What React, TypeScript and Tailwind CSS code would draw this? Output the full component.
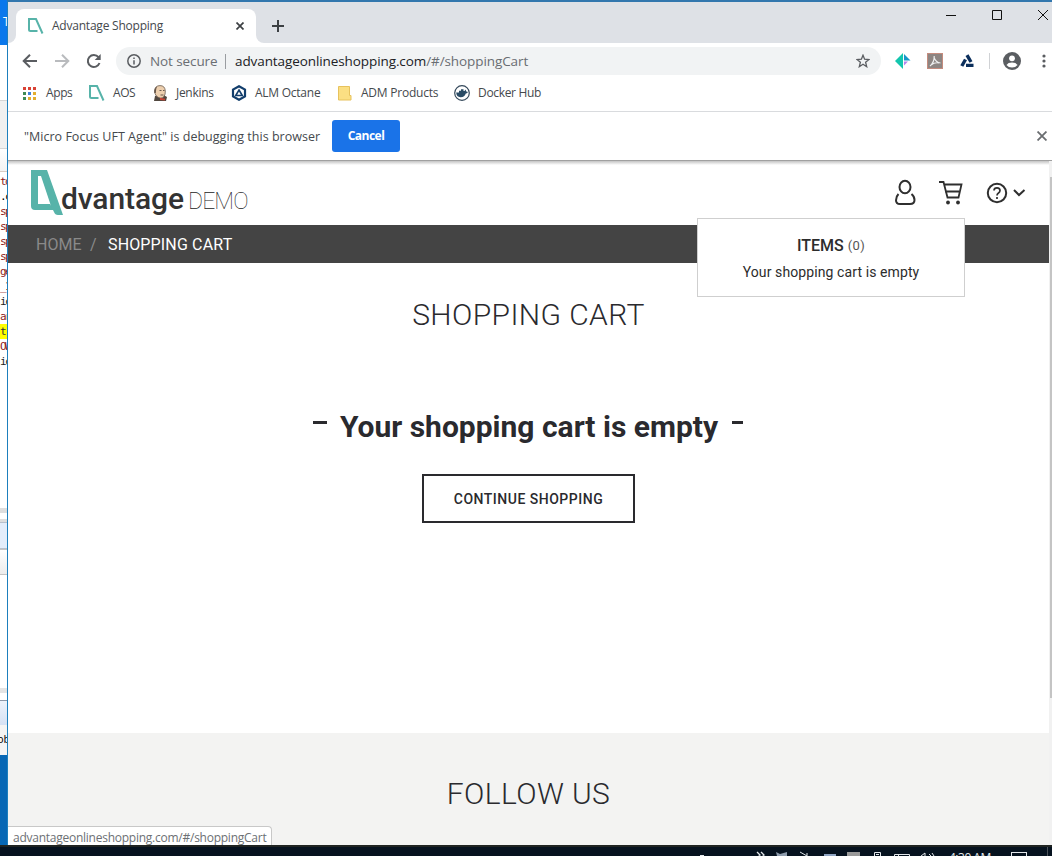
import React from "react";

const ui = "font-['Open_Sans','Noto_Sans',sans-serif]";
const roboto = "font-[Roboto,sans-serif]";

function AosMark({ className }: { className: string }) {
  return (
    <svg className={className} viewBox="0 0 32 45" fill="#57b3a9">
      <path
        fillRule="evenodd"
        d="M0 0H16L32 45H27Q24 45 23 42L22 40H4Q0 40 0 36ZM7 6V34H19L20 36L10 6Z"
      />
    </svg>
  );
}

function SmallMark({ className }: { className: string }) {
  return (
    <svg className={className} viewBox="0 0 16 16" fill="none" stroke="#57b3a9" strokeWidth="2">
      <path d="M9.500 13H2.500Q1 13 1 11.500V1H8L14.500 15.500" />
    </svg>
  );
}

const codeLines = [
  { text: "to", cls: "text-[#8b1a1a]" },
  { text: ".c", cls: "text-[#000]" },
  { text: "sp", cls: "text-[#8b1a1a]" },
  { text: "sp", cls: "text-[#8b1a1a]" },
  { text: "sp", cls: "text-[#8b1a1a]" },
  { text: "sp", cls: "text-[#8b1a1a]" },
  { text: "ge", cls: "text-[#8b1a1a]" },
  { text: "_1", cls: "text-[#8b1a1a]" },
  { text: "ic", cls: "text-[#222]" },
  { text: "ar", cls: "text-[#8b1a1a]" },
  { text: "t", cls: "bg-[#ffff00] text-[#333]" },
  { text: "OW", cls: "text-[#8b1a1a]" },
  { text: "ic", cls: "text-[#222]" },
];

function BackgroundWindow() {
  return (
    <div className="flex h-[845px] w-[7px] shrink-0 flex-col overflow-hidden bg-white">
      <div className={`h-[45px] shrink-0 bg-[#0a78ec] pt-[14px] pl-[3px] text-[12px] leading-[16px] text-white ${ui}`}>T</div>
      <div className="h-[55px] shrink-0 bg-white" />
      <div className="h-[49px] shrink-0 border-y border-[#d5d5d5] bg-[#f0f0f0]" />
      <div className="h-[22px] shrink-0 bg-gradient-to-b from-white to-[#f3f3f3]" />
      <div className="h-[3px] shrink-0 border-t border-[#d9cdc4]" />
      <div className="h-[334px] shrink-0">
        {codeLines.map((l, i) => (
          <div
            key={i}
            className={`h-[15px] overflow-hidden font-['DejaVu_Sans_Mono','Liberation_Mono',monospace] text-[11px] leading-[15px] tracking-[-1.5px] whitespace-nowrap ${l.cls}`}
          >
            {l.text}
          </div>
        ))}
      </div>
      <div className="h-[5px] shrink-0 bg-[#dedede]" />
      <div className="h-[6px] shrink-0 bg-white" />
      <div className="h-[3px] shrink-0 bg-[#dedede]" />
      <div className="h-[27px] shrink-0 border-y border-[#b8c0cc] bg-[#e3edfb]" />
      <div className="h-[26px] shrink-0 border-y border-[#c4c4c4] bg-gradient-to-b from-white to-[#ececec]" />
      <div className="h-[113px] shrink-0 bg-white" />
      <div className="h-[5px] shrink-0 bg-[#e4e4e4]" />
      <div className="h-[7px] shrink-0 bg-white" />
      <div className="h-[25px] shrink-0 border-t border-[#8e98a8] bg-gradient-to-b from-[#eef3fb] to-[#d5e1f4]" />
      <div className={`h-[30px] shrink-0 bg-[#f4f4f4] pt-[6px] text-[11px] leading-[16px] whitespace-nowrap text-black ${ui}`}>
        <span className="-ml-[3px]">ob</span>
      </div>
      <div className="flex-1 bg-[#0767b5]" />
    </div>
  );
}

function TabStrip() {
  return (
    <div className="flex h-[41px] shrink-0 bg-[#dee1e6]">
      <div className="flex w-[8px] shrink-0 bg-white">
        <div className="w-[8px] rounded-br-[8px] bg-[#dee1e6]" />
      </div>
      <div className="mt-[7px] flex h-[34px] w-[240px] shrink-0 items-center rounded-t-[8px] bg-white pl-[12px]">
        <SmallMark className="h-[16px] w-[16px] shrink-0" />
        <span className={`ml-[8px] w-[184px] text-[12px] tracking-[-0.22px] whitespace-nowrap text-[#45494d] ${ui}`}>Advantage Shopping</span>
        <svg className="h-[8px] w-[8px]" viewBox="0 0 8 8" stroke="#3c4043" strokeWidth="1.7">
          <path d="M.5 .5 7.5 7.5M7.5 .5.5 7.5" />
        </svg>
      </div>
      <div className="flex w-[8px] shrink-0 bg-white">
        <div className="w-[8px] rounded-bl-[8px] bg-[#dee1e6]" />
      </div>
      <svg className="mt-[18px] ml-[8px] h-[12px] w-[12px]" viewBox="0 0 12 12" stroke="#3c4043" strokeWidth="2">
        <path d="M6 0V12M0 6H12" />
      </svg>
      <div className="flex-1" />
      <svg className="mt-[7px] mr-[4px] h-[12px] w-[102px]" viewBox="0 0 102 12" fill="none" stroke="#111" strokeWidth="1">
        <path d="M0 6.5H10M46.5 1.5H55.5V10.5H46.5Z M92 1 102 11M102 1 92 11" />
      </svg>
    </div>
  );
}

function Toolbar() {
  return (
    <div className={`flex h-[36px] shrink-0 items-center pl-[14px] ${ui}`}>
      <svg className="h-[16px] w-[82px] shrink-0" viewBox="0 0 82 16" fill="none" strokeWidth="2">
        <path d="M15 8H2M8 1.7 1.7 8 8 14.3" stroke="#5a5d61" />
        <path d="M33 8H46M40 1.7 46.3 8 40 14.3" stroke="#b9bbbe" />
        <path d="M76.5 4.2A6 6 0 1 0 77.500 10" stroke="#5a5d61" />
        <path d="M78.700 1V7H72.700Z" fill="#5a5d61" stroke="none" />
      </svg>
      <div className="ml-[12px] flex h-[28px] w-[765px] shrink-0 items-center rounded-full bg-[#f1f3f4] pl-[11px] text-[13.5px] whitespace-nowrap">
        <svg className="h-[14px] w-[14px] shrink-0" viewBox="0 0 14 14" fill="none" stroke="#5a5d61" strokeWidth="1.5">
          <circle cx="7" cy="7" r="6.2" />
          <path d="M7 6.2V10.5M7 3.5V5" />
        </svg>
        <span className="ml-[9px] w-[75px] tracking-[-0.1px] text-[#6a6e73]">Not secure</span>
        <span className="h-[15px] w-px bg-[#9a9da1]" />
        <span className="ml-[9px] w-[621px] tracking-[-0.09px] text-[#696d72]">
          <span className="text-[#202124]">advantageonlineshopping.com</span>/#/shoppingCart
        </span>
        <svg className="h-[14px] w-[14px] shrink-0" viewBox="0 0 14 14" fill="none" stroke="#5a5d61" strokeWidth="1.3">
          <path d="M7 1.2 8.6 5.2 13 5.5 9.6 8.2 10.7 12.7 7 10.3 3.3 12.7 4.4 8.2 1 5.5 5.4 5.2Z" />
        </svg>
      </div>
      <svg className="ml-[14px] h-[16px] w-[16px] shrink-0" viewBox="0 0 16 16">
        <path d="M0 8 8 0V16Z" fill="#13c6ae" />
        <path d="M9 1 15.5 7.5H9Z" fill="#1597c9" />
        <path d="M9 8.5H13L9 12.5Z" fill="#b383ee" />
      </svg>
      <svg className="ml-[16px] h-[16px] w-[16px] shrink-0" viewBox="0 0 16 16">
        <rect x=".5" y=".5" width="15" height="15" fill="#8d8582" stroke="#c48b7d" />
        <path d="M3 13Q7.500 9 7.200 3M7.200 5Q9 9.500 13.500 10M4 12Q8 9 12 10" fill="none" stroke="#eee" strokeWidth="1.2" />
      </svg>
      <svg className="ml-[17px] h-[14px] w-[15px] shrink-0" viewBox="0 0 15 14" stroke="#0c2f5c" strokeWidth="3.4" fill="none">
        <path d="M7 1.2 11 8M5.500 5.500 1.800 12M6 11.400H13.500" />
      </svg>
      <span className="ml-[14px] h-[16px] w-px bg-[#d0d2d5]" />
      <svg className="ml-[13px] h-[18px] w-[18px] shrink-0" viewBox="0 0 18 18">
        <circle cx="9" cy="9" r="9" fill="#5a5d61" />
        <circle cx="9" cy="6.3" r="2.9" fill="#fff" />
        <path d="M3.5 13Q5 10.6 9 10.6T14.5 13Q12.5 15.6 9 15.6T3.5 13" fill="#fff" />
      </svg>
      <svg className="ml-[21px] h-[14px] w-[4px] shrink-0" viewBox="0 0 4 14" fill="#5a5d61">
        <circle cx="2" cy="2" r="1.6" />
        <circle cx="2" cy="7" r="1.6" />
        <circle cx="2" cy="12" r="1.6" />
      </svg>
    </div>
  );
}

const dots = ["#d94235", "#d94235", "#d94235", "#3f8a55", "#3f80d8", "#e3ae2f", "#3f8a55", "#e3ae2f", "#e3ae2f"];

function Bookmarks() {
  return (
    <div className={`flex h-[33px] shrink-0 items-center border-b border-[#d9dbde] pb-[4px] pl-[15px] text-[12px] whitespace-nowrap text-[#45494d] ${ui}`}>
      <svg className="h-[13px] w-[13px] shrink-0" viewBox="0 0 13 13">
        {dots.map((c, i) => (
          <rect key={i} x={(i % 3) * 5} y={Math.floor(i / 3) * 5} width="3" height="3" fill={c} />
        ))}
      </svg>
      <span className="ml-[10px] w-[43px] tracking-[-0.4px]">Apps</span>
      <SmallMark className="h-[16px] w-[16px] shrink-0" />
      <span className="ml-[8px] w-[39px] tracking-[-0.4px]">AOS</span>
      <svg className="h-[16px] w-[16px] shrink-0" viewBox="0 0 16 16">
        <path d="M2 16 3 11 10 9 15 12 14 16Z" fill="#51473f" />
        <path d="M2.500 6Q3 .6 8 .6T13.300 6Q13.500 13 8.500 13.200Q3 12 2.500 6" fill="#edcfae" stroke="#6b5d52" strokeWidth=".8" />
        <path d="M2.300 8Q2 3 5 1.500Q3.800 4 3.800 8Z" fill="#65564a" />
        <path d="M7.500 5.500H9.500M11 5.500H12.500M8.500 10H11.500" fill="none" stroke="#463a33" strokeWidth=".8" />
        <path d="M8 12.7 13 13.8 13 15.5 8 15Z" fill="#c44334" />
      </svg>
      <span className="ml-[8px] w-[55px] tracking-[-0.3px]">Jenkins</span>
      <svg className="h-[16px] w-[16px] shrink-0" viewBox="0 0 16 16" fill="none" stroke="#123e6c">
        <path d="M8 1.2 14 4.6V11.4L8 14.8 2 11.4V4.6Z" strokeWidth="2.2" />
        <path d="M8 5 11.3 10.5H4.7Z" strokeWidth="1.6" />
      </svg>
      <span className="ml-[8px] w-[83px] tracking-[-0.25px]">ALM Octane</span>
      <svg className="h-[15px] w-[14px] shrink-0" viewBox="0 0 14 15">
        <path d="M.5 .5H11.5V9.5H13V14H.5Z" fill="#fbdf83" stroke="#e7c25d" />
      </svg>
      <span className="ml-[9px] w-[93px] tracking-[-0.23px]">ADM Products</span>
      <svg className="h-[16px] w-[16px] shrink-0" viewBox="0 0 16 16">
        <circle cx="8" cy="8" r="7.3" fill="#fff" stroke="#35495b" strokeWidth="1.2" />
        <path d="M2.2 7.4H5V5.7H7V4.2H9.5V6H10.5L11.5 4.6L12.3 6.6L14 7Q13 8.5 11.8 8.5Q10.7 12.3 6.5 12.2Q2.4 11.8 2.2 7.4" fill="#294b65" />
      </svg>
      <span className="ml-[8px] tracking-[-0.32px]">Docker Hub</span>
    </div>
  );
}

function InfoBar() {
  return (
    <div className={`flex h-[49px] shrink-0 items-center border-b border-[#a0a0a0] pl-[16px] ${ui}`}>
      <span className="w-[308px] pt-[2px] text-[12.5px] tracking-[0.02px] whitespace-nowrap text-[#45494d]">"Micro Focus UFT Agent" is debugging this browser</span>
      <button className="h-[32px] w-[68px] rounded-[3px] bg-[#1a73e8] text-[12px] font-bold tracking-[-0.5px] text-white">Cancel</button>
      <div className="flex-1" />
      <svg className="mr-[5px] h-[10px] w-[10px]" viewBox="0 0 9 9" stroke="#6a6d70" strokeWidth="1.6">
        <path d="M.5 .5 8.5 8.5M8.5 .5.5 8.5" />
      </svg>
    </div>
  );
}

function CartPopup() {
  return (
    <div className="absolute top-[57px] left-[689px] h-[79px] w-[268px] border border-[#cfcfcf] bg-white text-center text-[#2c2c2c]">
      <div className="mt-[17px] h-[20px] text-[16px] leading-[20px] font-medium">
        ITEMS <span className="relative -top-px text-[13px] font-normal tracking-[0.4px] text-[#555]">(0)</span>
      </div>
      <div className="mt-[7px] text-[14px] leading-[18px] tracking-[0.1px]">Your shopping cart is empty</div>
    </div>
  );
}

function ShopPage() {
  return (
    <div className={`relative flex flex-1 overflow-hidden bg-white ${roboto}`}>
      <div className="flex w-[1041px] shrink-0 flex-col">
        <div className="h-[4px] shrink-0 bg-gradient-to-b from-[#c4c4c4] to-white" />
        <header className="flex h-[60px] shrink-0 items-start pl-[23px]">
          <AosMark className="mt-[5px] h-[45px] w-[32px] shrink-0" />
          <span className="-ml-[2px] w-[127px] pt-[16px] text-[30px] leading-[36px] font-medium tracking-[-0.1px] text-[#333]">dvantage</span>
          <span className="pt-[20px] text-[23px] leading-[34px] font-thin tracking-[-0.9px] text-[#222]">DEMO</span>
          <div className="flex-1" />
          <svg className="mt-[14px] mr-[23px] h-[28px] w-[134px]" viewBox="0 0 134 28" fill="none" stroke="#2f2f2f" strokeWidth="2">
            <ellipse cx="13" cy="8" rx="5.5" ry="6.3" />
            <path d="M6.5 15Q4 17.5 4 21.2Q4 25 8 25H18Q22.500 25 22.500 21Q22.500 17.500 19.500 15" />
            <path d="M47 3H51.500L55.500 18.500H66.500L69.500 5.500H52M53 12.500H67" strokeWidth="1.800" />
            <circle cx="56" cy="23.500" r="1.900" fill="#2f2f2f" stroke="none" />
            <circle cx="66" cy="23.500" r="1.900" fill="#2f2f2f" stroke="none" />
            <circle cx="105" cy="14" r="9.200" />
            <path d="M102 11.500Q102 8.800 105 8.800T108 11.500Q108 13 106.500 14Q105 15 105 16.500M105 18V20" strokeWidth="1.700" />
            <path d="M122 11 127 16 132.500 11" />
          </svg>
        </header>
        <nav className="flex h-[38px] shrink-0 items-center bg-[#444] pt-[2px] pl-[28px] text-[16px] whitespace-nowrap">
          <span className="w-[54px] text-[#8a8a8a]">HOME</span>
          <span className="w-[18px] text-[#8a8a8a]">/</span>
          <span className="tracking-[0.15px] text-white">SHOPPING CART</span>
        </nav>
        <main className="flex h-[470px] shrink-0 flex-col items-center text-[#2a2a2e]">
          <h1 className="mt-[34px] h-[36px] text-[30px] leading-[36px] font-light tracking-[0.4px]">SHOPPING CART</h1>
          <div className="mt-[76px] mr-[2px] flex h-[36px] w-[430px] items-start justify-between">
            <span className="mt-[12px] h-[3px] w-[14px] bg-[#2a2a2e]" />
            <span className="text-[30px] leading-[36px] font-bold">Your shopping cart is empty</span>
            <span className="mt-[12px] h-[3px] w-[11px] bg-[#2a2a2e]" />
          </div>
          <button className="mt-[29px] h-[49px] w-[213px] border-2 border-[#2a2a2e] pt-[2px] text-[14px] font-medium tracking-[0.5px]">CONTINUE SHOPPING</button>
        </main>
        <footer className="flex flex-1 justify-center bg-[#f3f3f2] text-[#2a2a2e]">
          <h2 className="pt-[43px] text-[30px] leading-[36px] font-light tracking-[0.4px]">FOLLOW US</h2>
        </footer>
      </div>
      <div className="flex w-[3px] flex-col bg-[#f1f1f1] pl-[1px]">
        <div className="mt-[16px] h-[521px] bg-[#c4c4c4]" />
      </div>
      <CartPopup />
      <div className={`absolute bottom-0 left-0 h-[19px] w-[264px] overflow-hidden rounded-tr-[4px] border-t border-r border-[#c8c8c8] bg-white pl-[5px] text-[12px] leading-[21px] tracking-[-0.25px] whitespace-nowrap text-[#6c7074] ${ui}`}>
        advantageonlineshopping.com/#/shoppingCart
      </div>
    </div>
  );
}

function Taskbar() {
  return (
    <div className="flex h-[11px] shrink-0 justify-end overflow-hidden border-t-2 border-[#202422] bg-[#06121f]">
      <svg className="h-[9px] w-[249px] shrink-0" viewBox="0 0 249 9" fill="none" stroke="#e4e8ec" strokeWidth="1">
        <path d="M0 8.500H4" />
        <path d="M57 5 60 8 58 10M61 5 64 8 62 10" strokeWidth="1.300" />
        <path d="M76 5 80 7 87 5V9H77Z" fill="#8d9bac" stroke="none" />
        <path d="M100 5 107 9M107 6V9" />
        <path d="M124 7H136V9H124Z" fill="#8fa4c3" stroke="none" />
        <path d="M147 5H160V9H147Z" fill="#999" stroke="none" />
        <path d="M174.500 9V5.500H180.500V9M176 7.500H179M194.500 9V7.500H209.500V9M198.500 7V9M221 9 225 6V9M229 7 231 9M232 6 234 9" />
      </svg>
      <div className={`h-[9px] w-[62px] shrink-0 overflow-hidden text-[12px] leading-[22px] tracking-[-0.5px] whitespace-nowrap text-[#e4e8ec] ${ui}`}>4:30 AM</div>
      <div className="mt-[5px] h-[9px] w-[16px] shrink-0 border border-[#e4e8ec]" />
      <div className="ml-[20px] w-px shrink-0 bg-[#4a5058]" />
      <div className="w-[4px] shrink-0" />
    </div>
  );
}

export default function App() {
  return (
    <div className="flex h-[856px] w-[1052px] flex-col overflow-hidden bg-white">
      <div className="flex h-[845px] shrink-0">
        <BackgroundWindow />
        <div className="flex h-[845px] w-[1045px] shrink-0 flex-col border-t-2 border-l border-t-[#3277ae] border-l-[#1d7fbd] bg-white">
          <TabStrip />
          <Toolbar />
          <Bookmarks />
          <InfoBar />
          <ShopPage />
        </div>
      </div>
      <Taskbar />
    </div>
  );
}
